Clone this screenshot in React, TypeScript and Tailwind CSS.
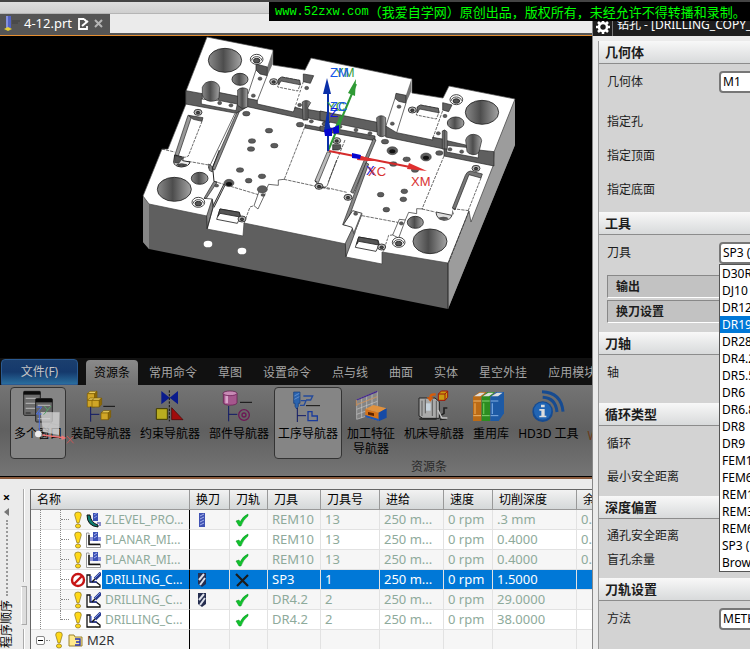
import type { ReactNode } from 'react';

type Point = [number, number];

function Holes({ points, rx = 12, ry = 8 }: { points: Point[]; rx?: number; ry?: number }) {
  return (
    <>
      {points.map(([x, y]) => (
        <ellipse key={`${x}-${y}`} cx={x} cy={y} rx={rx} ry={ry} fill="#5c5c5c" stroke="#333" strokeWidth="1.5" />
      ))}
    </>
  );
}

function Bore({ x, y, rx, ry }: { x: number; y: number; rx: number; ry: number }) {
  return <ellipse cx={x} cy={y} rx={rx} ry={ry} fill="url(#bore)" stroke="#222" strokeWidth="2.5" />;
}

function CounterBore({ x, y }: { x: number; y: number }) {
  return (
    <g stroke="#222" strokeWidth="2.5">
      <ellipse cx={x} cy={y} rx="19" ry="15" fill="#fff" />
      <path d={`M${x - 15} ${y + 3}a15 11 0 0 1 30 0`} fill="none" />
      <ellipse cx={x} cy={y + 4} rx="10" ry="7" fill="#555" />
    </g>
  );
}

function Bolt({ x, y }: { x: number; y: number }) {
  return (
    <g stroke="#222" strokeWidth="2.5">
      <ellipse cx={x} cy={y} rx="12" ry="9" fill="#bbb" />
      <ellipse cx={x} cy={y + 1} rx="5" ry="4" fill="#444" />
    </g>
  );
}

function Slot({ x, y }: { x: number; y: number }) {
  return (
    <g transform={`translate(${x} ${y})`} stroke="#222" strokeWidth="2">
      <path d="M3 6L12 0L66 10L68 22L60 42L0 30Z" fill="#fff" strokeDasharray="9 3" />
      <path d="M3 6L12 0L66 10L68 24L60 22L10 12L3 24Z" fill="#6a6a6a" />
    </g>
  );
}

function PartView() {
  return (
    <svg viewBox="0 36 593 322" className="block h-[322px] w-[593px]" role="img" aria-label="4-12.prt">
      <defs>
        <linearGradient id="bore">
          <stop offset="0" stopColor="#8a8a8a" />
          <stop offset=".45" stopColor="#4d4d4d" />
          <stop offset="1" stopColor="#a5a5a5" />
        </linearGradient>
      </defs>
      <path d="M207 37L273 50V65L305 70L311 58L412 79V93L443 98L449 86L515 99V145L448 309L149 249L143 242V196L162 149H168L186 104V91Z" fill="#5f5f5f" />
      <path d="M515 99L494 152L493 166L471 222L469 211L448 263V309L515 145Z" fill="#9c9c9c" />
      <path d="M143 196L149 204V249L143 242Z" fill="#858585" />
      <path
        d="M207 37L273 50V65L305 70L311 58L412 79V93L443 98L449 86L515 99L494 152L493 166L471 222L469 211L448 263L382 252V264L346 257V244L244 223L243 236L207 229V216L149 204L143 196L162 149H168L186 104V91Z"
        fill="#fff"
        stroke="#444"
        strokeWidth=".7"
      />
      <path d="M448 263V309" stroke="#222" />

      {/* upper left quarter */}
      <g transform="translate(130 30) scale(.33333)">
        <path d="M428 63V102L412 137V110Z" fill="#777" />
        <path d="M378 102L412 111V137L390 132L378 120Z" fill="#555" stroke="#222" strokeWidth="2" />
        <g fill="#5f5f5f" stroke="#222" strokeWidth="2">
          <path d="M167 182L217 191V208L265 212V187L325 199L352 205L382 211V222L490 246L496 232L525 240V268L352 230L320 250L167 222Z" />
          <path d="M520 132L551 137L541 160L520 155Z" />
          <path d="M525 237L600 250V278L525 262Z" />
          <path d="M525 284L600 298V308L525 294Z" />
          <path d="M320 248L328 245L254 420L246 416Z" fill="#888" />
          <path d="M174 256L184 262L145 378L135 374Z" fill="#999" />
          <path d="M176 256L219 263L216 274L190 268L184 264Z" />
          <path d="M592 365L602 368L565 458L555 452Z" fill="#bbb" />
        </g>
        <path d="M214 207L265 211L322 222L318 242L214 222Z" fill="#fff" stroke="#222" strokeWidth="2" />
        <g fill="none" stroke="#222" strokeWidth="2">
          <path d="M378 120L354 192M411 138L382 212M315 250L236 415" />
          <path d="M520 155L493 238" strokeDasharray="8 5" />
          <path d="M524 292L462 450" strokeDasharray="10 3" />
          <path d="M216 274L175 378L165 382L146 378" strokeDasharray="9 3" />
          <path d="M95 357L134 366M175 394L236 405V415" strokeDasharray="10 3" />
        </g>
        <path d="M134 375L160 382L158 392L180 396Q178 409 154 411Q132 409 131 396Z" fill="#eee" stroke="#222" strokeWidth="3" />
        <path d="M134 376L158 384L146 400L134 398ZM140 404Q154 398 170 404Q156 414 140 404" fill="#555" stroke="#222" strokeWidth="2" />
        <path d="M236 402L247 410V426L238 421Z" fill="#888" stroke="#222" strokeWidth="2" />
        <path d="M217 172Q224 154 244 154Q264 155 269 173L267 202Q262 214 241 214Q221 211 217 194Z" fill="url(#bore)" stroke="#222" strokeWidth="2" />
        <path d="M323 180Q336 168 353 178V231L337 236L323 226Z" fill="url(#bore)" stroke="#222" strokeWidth="2" />
        <path d="M517 216Q530 206 542 218L534 232V270H519Z" fill="url(#bore)" stroke="#222" strokeWidth="2" />
        <Bore x={285} y={91} rx={50} ry={36} />
        <Bore x={330} y={148} rx={24} ry={18} />
        <CounterBore x={380} y={88} />
        <Slot x={443} y={141} />
        <Bolt x={431} y={155} />
        <Bolt x={204} y={247} />
        <Holes points={[[349, 251], [417, 302], [366, 333], [433, 347], [363, 357], [330, 420], [396, 439], [510, 284]]} rx={11} ry={7} />
        <Holes points={[[390, 146], [370, 197], [269, 219], [303, 226], [530, 174], [509, 225], [544, 274], [584, 282]]} rx={6} ry={5} />
      </g>

      {/* upper right quarter */}
      <g transform="translate(320 30) scale(.33333)">
        <path d="M274 148V183L258 219V195Z" fill="#777" />
        <g fill="#5f5f5f" stroke="#222" strokeWidth="2">
          <path d="M0 243L172 277V306L0 270Z" />
          <path d="M0 288L165 318V332L0 302Z" />
          <path d="M228 190L258 196V219L236 214L225 205Z" />
          <path d="M197 288L230 308L338 330V322L372 328V357L197 321Z" />
          <path d="M368 218L396 225L386 245L368 240Z" />
          <path d="M372 330L437 345L475 360L522 365V408L372 378Z" />
          <path d="M160 326L168 330L100 490L92 486Z" fill="#888" />
        </g>
        <path d="M382 346L438 352L475 368V384L380 366Z" fill="#fff" stroke="#222" strokeWidth="2" />
        <g fill="none" stroke="#222" strokeWidth="2">
          <path d="M225 205L197 290M258 219L230 308" />
          <path d="M368 242L338 326M372 378L306 537" strokeDasharray="10 3" />
          <path d="M75 330L25 455" strokeDasharray="10 3" />
        </g>
        <path d="M170 263Q183 251 197 263V316Q183 325 172 314Z" fill="url(#bore)" stroke="#222" strokeWidth="2" />
        <path d="M367 303Q374 296 381 305V357H367Z" fill="url(#bore)" stroke="#222" strokeWidth="2" />
        <path d="M437 330Q442 313 461 313Q482 315 485 332L477 366Q470 376 458 374Q444 372 441 364Z" fill="url(#bore)" stroke="#222" strokeWidth="2" />
        <Bore x={486} y={247} rx={50} ry={36} />
        <Bore x={407} y={279} rx={25} ry={18} />
        <CounterBore x={409} y={209} />
        <Slot x={289} y={225} />
        <Bolt x={277} y={240} />
        <Bolt x={50} y={332} />
        <Bolt x={468} y={415} />
        <path d="M38 344H62V356L55 360H38Z" fill="#555" stroke="#222" strokeWidth="2" />
        <path d="M451 423L487 432L483 444L447 434L405 540L397 534L436 436Q440 425 451 423Z" fill="#777" stroke="#222" strokeWidth="2" />
        <path d="M483 444L445 541" stroke="#222" strokeWidth="2" strokeDasharray="9 3" />
        <Holes points={[[217, 362], [318, 381]]} rx={16} ry={12} />
        <ellipse cx="217" cy="364" rx="9" ry="6" fill="#111" />
        <ellipse cx="318" cy="383" rx="9" ry="6" fill="#111" />
        <Holes points={[[195, 335], [260, 388], [220, 402], [358, 369], [285, 420]]} rx={11} ry={7} />
        <Holes points={[[237, 230], [217, 281], [375, 258], [355, 310], [390, 358], [425, 365], [12, 282], [60, 290], [108, 300], [150, 310]]} rx={6} ry={5} />
      </g>

      {/* lower left quarter */}
      <g transform="translate(130 160) scale(.33333)">
        <path d="M252 64L262 66L229 115H222Z" fill="#888" stroke="#222" strokeWidth="2" />
        <path d="M246 118L250 138L232 206L230 168Z" fill="#888" stroke="#222" strokeWidth="2" />
        <path d="M268 -30L248 22L252 64" fill="none" stroke="#222" strokeWidth="3" />
        <path d="M284 73L250 141" stroke="#222" strokeWidth="7" />
        <path d="M284 73L250 141" stroke="#aaa" strokeWidth="3" />
        <g fill="none" stroke="#222" strokeWidth="2">
          <path d="M222 115L247 117L250 140L231 206" />
          <path d="M252 64L385 104M462 58L600 88M342 190L360 141L372 137" strokeDasharray="10 3" />
          <path d="M445 60V76L416 73L407 92M445 60L462 58" />
          <path d="M388 92L372 137L384 147L406 100" fill="#fff" />
        </g>
        <path d="M555 62Q558 72 575 75" fill="none" stroke="#222" strokeWidth="3" />
        <Bore x={133} y={88} rx={51} ry={36} />
        <Bore x={209} y={55} rx={25} ry={18} />
        <CounterBore x={205} y={127} />
        <g transform="translate(260 147)" stroke="#222" strokeWidth="2.5">
          <path d="M10 0L68 10L72 22L62 43L0 31Z" fill="#fff" />
          <path d="M10 0L68 10L70 24L10 13L4 22Z" fill="#555" />
        </g>
        <Bolt x={336} y={177} />
        <Bolt x={567} y={79} />
        <Holes points={[[297, 69], [397, 88]]} rx={15} ry={11} />
        <ellipse cx="297" cy="72" rx="9" ry="6" fill="#111" />
        <Holes points={[[356, 62]]} rx={10} ry={7} />
        <Holes points={[[260, 77], [399, 105]]} rx={6} ry={4} />
        <ellipse cx="234" cy="252" rx="13" ry="10" fill="#fff" />
        <ellipse cx="336" cy="273" rx="13" ry="10" fill="#fff" />
      </g>

      {/* lower right quarter */}
      <g transform="translate(320 160) scale(.33333)">
        <g fill="#888" stroke="#222" strokeWidth="2">
          <path d="M138 8L146 12L78 196L68 194Z" />
          <path d="M98 204L105 218L78 290L76 250Z" />
        </g>
        <path d="M98 152L126 160L102 222L96 202L70 194Z" fill="#fff" stroke="#222" strokeWidth="2.5" />
        <path d="M125 162L101 222" stroke="#666" strokeWidth="5" />
        <g fill="none" stroke="#222" strokeWidth="2">
          <path d="M126 167L238 188M306 147L345 156M398 146L447 152L386 308M-5 77L80 97" strokeDasharray="10 3" />
          <path d="M50 0L22 76Q16 86 0 82" />
          <path d="M238 178L218 225L236 234L256 180ZM256 180L266 157L290 161V146L308 147" fill="#fff" />
          <path d="M218 225L206 226L190 275" strokeDasharray="8 3" />
        </g>
        <path d="M348 156Q349 178 372 181Q392 180 396 166Z" fill="#ddd" stroke="#222" strokeWidth="2.5" />
        <ellipse cx="370" cy="175" rx="14" ry="5" fill="#555" />
        <path d="M397 148L402 162L395 166Z" fill="#777" />
        <Bore x={330} y={244} rx={51} ry={37} />
        <Bore x={286} y={187} rx={24} ry={18} />
        <CounterBore x={236} y={247} />
        <g transform="translate(106 231)" stroke="#222" strokeWidth="2.5">
          <path d="M10 0L68 10L72 22L62 43L0 31Z" fill="#fff" />
          <path d="M10 0L68 10L70 24L10 13L4 22Z" fill="#555" />
        </g>
        <Bolt x={185} y={261} />
        <Bolt x={84} y={112} />
        <Holes points={[[182, 104], [253, 94], [250, 118], [199, 149]]} rx={10} ry={7} />
        <Holes points={[[107, 161], [244, 190]]} rx={6} ry={5} />
      </g>

      {/* coordinate axes */}
      <path d="M328 151L356 84" stroke="#2f9a35" strokeWidth="2" />
      <path d="M356 79L348 93L355 96Z M341 114L334 129L340 131Z" fill="#2f9a35" />
      <path d="M328 151V90" stroke="#0a2fa8" strokeWidth="2" />
      <path d="M327 78L323 94H331Z M327 112L324 131H331Z" fill="#0a2fa8" />
      <path d="M324 130L332 128V136H325Z M332 128L339 125V133L334 134Z" fill="#0505d0" />
      <path d="M329 151L410 167" stroke="#d52b2b" strokeWidth="2" />
      <path d="M427 171L409 163L407 169Z M378 161L358 155L357 160L368 161Z" fill="#e03030" />
      <path d="M352 153L361 155L360 159L352 158Z" fill="#0505d0" />
      <g className="font-['Liberation_Sans'] text-[13px]">
        <text x="335" y="77" fill="#3a9d3f">YM</text>
        <text x="330" y="77" fill="#1557e8">ZM</text>
        <text x="327" y="111" fill="#3a9d3f">YC</text>
        <text x="330" y="111" fill="#1557e8">ZC</text>
        <text x="330" y="117" fill="#1515d8">Z</text>
        <text x="366" y="175" fill="#1515d8">X</text>
        <text x="368" y="176" fill="#d83333">XC</text>
        <text x="411" y="186" fill="#d83333">XM</text>
      </g>
    </svg>
  );
}

function RibbonIcon({ left, children }: { left: number; children: ReactNode }) {
  return (
    <svg viewBox={`${left} 117 102 102`} className="relative z-10 h-[34px] w-[34px] overflow-visible" aria-hidden="true">
      {children}
    </svg>
  );
}

function Cube({ x, y }: { x: number; y: number }) {
  return (
    <g transform={`translate(${x} ${y})`} stroke="#7d5c00" strokeWidth="2">
      <path d="M0 7L8 0H29L22 7Z" fill="#e8cd60" />
      <path d="M0 7H22V27H0Z" fill="#d0a526" />
      <path d="M22 7L29 0V19L22 27Z" fill="#8e6a06" />
    </g>
  );
}

const ribbonItems: { label: string[]; active?: boolean; icon: ReactNode }[] = [
  {
    label: ['多个窗口'],
    active: true,
    icon: (
      <RibbonIcon left={66}>
        <rect x="74" y="124" width="50" height="72" rx="3" fill="#6b6b6b" stroke="#252525" strokeWidth="3" />
        <path d="M74 124H124V134H74Z" fill="#0c0c0c" />
        <path d="M80 145H118M80 160H118M80 175H118" stroke="#aaa" strokeWidth="4" />
        <path d="M80 189H95" stroke="#222" strokeWidth="3" />
        <rect x="110" y="146" width="50" height="70" rx="3" fill="#666" stroke="#252525" strokeWidth="3" />
        <path d="M110 146H160V157H110Z" fill="#0c0c0c" />
        <path d="M116 166H154M116 206H154" stroke="#aaa" strokeWidth="4" />
        <path d="M125 186L182 187L180 255L132 246Z" fill="#d8d8d8" opacity=".75" />
        <path d="M155 187V220L135 246M155 220L181 226" stroke="#bbb" strokeWidth="2" fill="none" />
        <path d="M121 248V185M112 171H128L112 192H128" stroke="#4a6fe0" strokeWidth="3" fill="none" />
        <path d="M136 168L146 180L156 168M146 180L134 194" stroke="#56a56a" strokeWidth="3" fill="none" />
        <circle cx="118" cy="252" r="10" fill="#eee" />
        <path d="M130 253L188 260V256L202 264L188 270V265L130 257Z" fill="#f07575" />
        <path d="M204 258L224 280M224 258L204 280" stroke="#c85858" strokeWidth="3" />
      </RibbonIcon>
    ),
  },
  {
    label: ['装配导航器'],
    icon: (
      <RibbonIcon left={252}>
        <Cube x={262} y={124} />
        <Cube x={262} y={144} />
        <Cube x={276} y={144} />
        <Cube x={303} y={182} />
        <path d="M310 169H345" stroke="#111" strokeWidth="3" />
        <path d="M272 170V215M272 193H298" stroke="#101a66" strokeWidth="3" />
      </RibbonIcon>
    ),
  },
  {
    label: ['约束导航器'],
    icon: (
      <RibbonIcon left={459}>
        <path d="M484 123L509 143L484 163ZM534 123L509 143L534 163Z" fill="#0a1b8c" />
        <path d="M469 176H502V208H469Z" fill="#b9ad20" stroke="#3f3a00" strokeWidth="3" />
        <path d="M515 173L549 209H515Z" fill="#a00c0c" stroke="#400" strokeWidth="2" />
        <path d="M508 121V214" stroke="#111" strokeWidth="3" strokeDasharray="7 4" />
      </RibbonIcon>
    ),
  },
  {
    label: ['部件导航器'],
    icon: (
      <RibbonIcon left={666}>
        <path d="M670 130V158C670 168 711 168 711 158V130Z" fill="#a5578d" stroke="#5e1247" strokeWidth="2" />
        <path d="M676 136V160H684V138Z" fill="#d9a5ca" />
        <ellipse cx="690" cy="130" rx="21" ry="7" fill="#c78ab5" stroke="#5e1247" strokeWidth="2" />
        <path d="M720 157H756" stroke="#111" strokeWidth="3" />
        <path d="M686 168V214M686 193H712" stroke="#101a66" strokeWidth="3" />
        <circle cx="732" cy="195" r="16" fill="none" stroke="#6e1856" strokeWidth="4" />
        <circle cx="732" cy="195" r="6" fill="none" stroke="#6e1856" strokeWidth="4" />
      </RibbonIcon>
    ),
  },
  {
    label: ['工序导航器'],
    active: true,
    icon: (
      <RibbonIcon left={-27}>
        <path d="M-19 126H0V160H-5V169L-10 177L-15 169V160H-19Z" fill="#2b64ae" stroke="#123a78" strokeWidth="2" />
        <path d="M-17 138L-2 130M-17 148L-2 140" stroke="#7ba3dc" strokeWidth="2" />
        <path d="M2 152H18L12 166H0M10 138H38L32 150H18" fill="none" stroke="#244a9a" strokeWidth="4" />
        <path d="M18 167H60" stroke="#111" strokeWidth="3" />
        <path d="M-8 174V216M-8 197H18" stroke="#101a66" strokeWidth="3" />
        <path d="M24 185H36V198H52V212H24Z" fill="none" stroke="#1b3c9c" strokeWidth="4" />
      </RibbonIcon>
    ),
  },
  {
    label: ['加工特征', '导航器'],
    icon: (
      <RibbonIcon left={162}>
        <path d="M170 150L232 124V188L170 208ZM185 144V204M200 138V198M216 131V193M170 164L232 140M170 178L232 154M170 193L232 171" fill="#aaa" fillOpacity=".4" stroke="#c5c5c5" strokeWidth="2" />
        <path d="M170 150L232 124" stroke="#43268e" strokeWidth="4" />
        <path d="M170 164L232 140M169 150V168" stroke="#c97830" strokeWidth="2" />
        <path d="M196 177L220 165L260 175L236 188Z" fill="#df9240" />
        <path d="M196 177L236 188V214L196 202Z" fill="#d7741a" />
        <path d="M236 188L260 175V203L236 214Z" fill="#164aa5" />
        <path d="M204 186L222 190V198L204 194Z" fill="#5f2400" />
        <path d="M196 202L236 214V207L196 195Z" fill="#1d58b5" />
      </RibbonIcon>
    ),
  },
  {
    label: ['机床导航器'],
    icon: (
      <RibbonIcon left={351}>
        <path d="M357 144H405L418 155V205H368L357 198Z" fill="#aaa" stroke="#222" strokeWidth="3" />
        <path d="M366 152V198M376 148V190M397 148V198M409 152V204" stroke="#333" strokeWidth="2" />
        <path d="M378 160H392V182H378Z" fill="#c8d4de" />
        <path d="M358 207H410M418 199L432 190V174H442M420 208L440 206" stroke="#222" strokeWidth="5" fill="none" />
        <path d="M414 180L426 204L442 204" stroke="#c9c9c9" strokeWidth="4" fill="none" />
        <path d="M407 130Q387 128 388 142H380L391 155L401 142H394Q395 136 407 137Z" fill="#d55c0d" />
        <path d="M415 132L424 123H443V142L435 151H415Z" fill="#c99a10" stroke="#a01808" strokeWidth="3" />
        <path d="M415 132H435V151M435 132L443 123" fill="none" stroke="#a01808" strokeWidth="3" />
      </RibbonIcon>
    ),
  },
  {
    label: ['重用库'],
    icon: (
      <RibbonIcon left={522}>
        <path d="M519 140L538 126H560L544 142V213H519Z" fill="#bb6b16" />
        <path d="M545 140L563 126H585L570 142V213H545Z" fill="#2d8d20" />
        <path d="M571 140L589 126H612V190L596 213H571Z" fill="#1d5aa5" />
        <path d="M522 139L539 128H555L541 139ZM548 139L565 128H581L567 139ZM574 139L591 128H608L594 139Z" fill="#ddd" />
        <path d="M520 153H543M520 197H543" stroke="#efb76d" strokeWidth="3" />
        <path d="M546 153H569M546 197H569" stroke="#86d174" strokeWidth="3" />
        <path d="M572 153H595M572 197H595" stroke="#84aee0" strokeWidth="3" />
        <path d="M525 160V192" stroke="#e9a24a" strokeWidth="4" />
        <path d="M551 160V192" stroke="#65c353" strokeWidth="4" />
        <path d="M577 160V192" stroke="#6f9fdb" strokeWidth="4" />
      </RibbonIcon>
    ),
  },
  {
    label: ['HD3D 工具'],
    icon: (
      <RibbonIcon left={696}>
        <circle cx="731" cy="185" r="31" fill="#164b91" />
        <circle cx="731" cy="183" r="26" fill="#2165b4" />
        <path d="M726 164H737V172H726ZM721 177H737V197H742V202H721V197H727V182H721Z" fill="#ddd" />
        <path d="M731 142Q770 144 774 186M729 125Q787 127 792 185" fill="none" stroke="#164b91" strokeWidth="9" />
      </RibbonIcon>
    ),
  },
];

const ribbonTabs = ['常用命令', '草图', '设置命令', '点与线', '曲面', '实体', '星空外挂', '应用模块'];

function Ribbon() {
  return (
    <section className="border-b-2 border-[#8a5a3c] bg-[#111] text-[12px]">
      <nav className="flex h-[27px] items-end overflow-hidden whitespace-nowrap pl-px text-[#a5a5a5]">
        <button className="mr-2 h-[26px] w-[77px] shrink-0 rounded-t-sm border border-[#2a5a92] bg-linear-to-b from-[#1b3f6e] via-[#15396c] to-[#2a6e9e] text-[#c4c4c4]">
          文件(F)
        </button>
        <button className="h-[25px] shrink-0 rounded-t-sm bg-linear-to-b from-[#8a8a8a] to-[#737373] px-2 text-black">
          资源条
        </button>
        {ribbonTabs.map((tab) => (
          <button key={tab} className="-mr-px h-[25px] shrink-0 px-[11px]">
            {tab}
          </button>
        ))}
      </nav>
      <div className="relative flex h-[92px] gap-[9px] overflow-hidden border-b border-black bg-linear-to-b from-[#747474] via-[#606060] to-[#757575] pt-[2px] pl-[14px]">
        {ribbonItems.map((item) => (
          <button
            key={item.label[0]}
            className={`-mx-1 flex h-[72px] shrink-0 flex-col items-center rounded-sm border px-[3px] pt-px leading-[15px] text-black ${
              item.active ? 'border-[#333] bg-[#858585]' : 'border-transparent'
            }`}
          >
            {item.icon}
            <span className="mt-[3px] whitespace-nowrap">
              {item.label.map((line) => (
                <span key={line} className="block">
                  {line}
                </span>
              ))}
            </span>
          </button>
        ))}
        <span className="shrink-0 pt-10 text-[#6b3a17]">W</span>
        <span className="absolute bottom-0 left-[411px] text-[#2a2a2a]">资源条</span>
      </div>
    </section>
  );
}

function Exclamation() {
  return (
    <svg viewBox="0 0 8 18" className="h-[18px] w-2 shrink-0" aria-hidden="true">
      <path d="M4 1Q7.500 1 7.300 4L5 12H3L.7 4Q.5 1 4 1Z" fill="#ffd91a" stroke="#8a7420" strokeWidth=".7" />
      <ellipse cx="4" cy="15" rx="2.600" ry="2" fill="#ffd91a" stroke="#8a7420" strokeWidth=".7" />
    </svg>
  );
}

function Blocked() {
  return (
    <svg viewBox="0 0 16 16" className="-mx-1 h-4 w-4 shrink-0" aria-hidden="true">
      <circle cx="8" cy="8" r="6" fill="#fff" stroke="#c61414" strokeWidth="2.400" />
      <path d="M4 12L12 4" stroke="#c61414" strokeWidth="2.400" />
    </svg>
  );
}

type OperationKind = 'zlevel' | 'planar' | 'drilling';

function OperationIcon({ kind }: { kind: OperationKind }) {
  return (
    <svg viewBox="0 0 15 16" className="h-4 w-[15px] shrink-0" fill="none" aria-hidden="true">
      {kind === 'zlevel' && (
        <>
          <path d="M1 3H4Q5 11 12 13V15Q1 14 1 3Z" fill="#0b7d70" stroke="#111" />
          <path d="M7 1H12V9H7Z" fill="#3c51b5" />
          <path d="M8 3L11 1M8 6L11 4" stroke="#8fa0e8" />
          <path d="M11 11H15M13 13H15" stroke="#16209c" />
        </>
      )}
      {kind === 'planar' && (
        <>
          <path d="M.5 1V15.500H14.500V12H3V1Z" fill="#fff" stroke="#999" />
          <path d="M3 3V12.500H14" stroke="#111" strokeWidth="1.500" />
          <path d="M7 0H12V9H7Z" fill="#3c51b5" />
          <path d="M4 6H7M4 8H7M12 6H15M12 8H15" stroke="#2230b5" />
          <path d="M8 3L11 1M8 6L11 4" stroke="#aab5ef" />
        </>
      )}
      {kind === 'drilling' && (
        <>
          <path d="M4 3H1V15H14V13L10 10H4Z" fill="#fff" stroke="#111" strokeWidth="1.300" />
          <path d="M15 1L9 7" stroke="#26398f" strokeWidth="3.500" />
          <path d="M14 1L9 6" stroke="#7d92dd" />
          <path d="M5 4V10H11" stroke="#223bc7" strokeWidth="1" />
          <path d="M9 7L6 10" stroke="#111" strokeWidth="1.500" />
        </>
      )}
    </svg>
  );
}

function ToolChange({ kind }: { kind: 'mill' | 'drill' }) {
  return (
    <svg viewBox="0 0 8 14" className="h-[14px] w-2" aria-hidden="true">
      {kind === 'mill' ? (
        <>
          <path d="M1 0H7V14H1Z" fill="#4053b3" />
          <path d="M2 3L6 1M2 6L6 4M2 9L6 7M2 12L6 10" stroke="#a6b2ec" />
        </>
      ) : (
        <>
          <path d="M0 0H8V11L4 14L0 11Z" fill="#252e50" />
          <path d="M1 7L6 1M2 12L7 5" stroke="#dce0ea" strokeWidth="2" />
        </>
      )}
    </svg>
  );
}

function PathStatus({ ok }: { ok: boolean }) {
  return (
    <svg viewBox="0 0 14 14" className="h-[14px] w-[14px]" aria-hidden="true">
      {ok ? (
        <path d="M1 8L4 7L5 9Q8 3 13 1L13 3Q8 7 6 13H4Z" fill="#0fc32c" stroke="#078c1c" strokeWidth=".5" />
      ) : (
        <path d="M1 1L13 13M13 2L2 13" stroke="#1b1b1b" strokeWidth="2.200" />
      )}
    </svg>
  );
}

type Operation = {
  name: string;
  kind: OperationKind;
  change?: 'mill' | 'drill';
  tool: string;
  number: string;
  depth: string;
  stock?: string;
  selected?: boolean;
};

const operations: Operation[] = [
  { name: 'ZLEVEL_PRO...', kind: 'zlevel', change: 'mill', tool: 'REM10', number: '13', depth: '.3 mm', stock: '0.' },
  { name: 'PLANAR_MI...', kind: 'planar', tool: 'REM10', number: '13', depth: '0.4000', stock: '0.' },
  { name: 'PLANAR_MI...', kind: 'planar', tool: 'REM10', number: '13', depth: '0.4000', stock: '0.' },
  { name: 'DRILLING_C...', kind: 'drilling', change: 'drill', tool: 'SP3', number: '1', depth: '1.5000', selected: true },
  { name: 'DRILLING_C...', kind: 'drilling', change: 'drill', tool: 'DR4.2', number: '2', depth: '29.0000' },
  { name: 'DRILLING_C...', kind: 'drilling', tool: 'DR4.2', number: '2', depth: '38.0000' },
];

const columns = [
  { title: '名称', width: 'w-[159px]' },
  { title: '换刀', width: 'w-10' },
  { title: '刀轨', width: 'w-[38px]' },
  { title: '刀具', width: 'w-[53px]' },
  { title: '刀具号', width: 'w-[59px]' },
  { title: '进给', width: 'w-16' },
  { title: '速度', width: 'w-[49px]' },
  { title: '切削深度', width: 'w-[84px]' },
  { title: '余量', width: 'w-16' },
];

function OperationRow({ op, last }: { op: Operation; last: boolean }) {
  const cell = `h-5 border-r border-b border-[#e2e2e2] p-0 ${op.selected ? 'bg-[#0078d7]' : ''}`;
  return (
    <tr className={op.selected ? 'text-white' : 'text-[#8eaa9b] odd:bg-[#f6f6f6] even:bg-white'}>
      <td className="h-5 border-r border-b border-r-black border-b-[#e2e2e2] p-0 text-[12px]">
        <div className={`flex h-[19px] items-center pl-[9px] ${op.selected ? 'bg-white' : ''}`}>
          <span className="h-[19px] w-5 shrink-0 border-l border-dotted border-[#888]" />
          <span className="h-[19px] w-[14px] shrink-0">
            <span className={`block border-l border-dotted border-[#888] ${last ? 'h-[10px]' : 'h-[19px]'}`}>
              <span className="block h-[10px] w-2 border-b border-dotted border-[#888]" />
            </span>
          </span>
          {op.selected ? <Blocked /> : <Exclamation />}
          <span className="w-1 shrink-0" />
          <OperationIcon kind={op.kind} />
          <span className={`ml-px flex-1 pl-[3px] leading-[19px] ${op.selected ? 'bg-[#0078d7]' : ''}`}>{op.name}</span>
        </div>
      </td>
      <td className={cell}>
        <div className="pl-2">{op.change && <ToolChange kind={op.change} />}</div>
      </td>
      <td className={cell}>
        <div className="pl-[5px]">
          <PathStatus ok={!op.selected} />
        </div>
      </td>
      <td className={`${cell} indent-1`}>{op.tool}</td>
      <td className={`${cell} indent-1`}>{op.number}</td>
      <td className={`${cell} indent-1`}>250 m...</td>
      <td className={`${cell} indent-1`}>0 rpm</td>
      <td className={`${cell} indent-1`}>{op.depth}</td>
      <td className={`${cell} indent-1`}>{op.stock}</td>
    </tr>
  );
}

function Navigator() {
  return (
    <section className="flex min-h-0 flex-1 overflow-hidden bg-[#ebebeb]">
      <div className="flex w-[21px] shrink-0 flex-col items-start pt-[10px]">
        <button className="h-4 w-[13px] text-center text-[13px] leading-4 font-bold text-black" aria-label="关闭">
          ×
        </button>
        <svg viewBox="0 0 5 8" className="mt-[3px] ml-1 h-2 w-[5px]" aria-hidden="true">
          <path d="M5 0V8L0 4Z" fill="#777" />
        </svg>
        <span className="mt-1 ml-[6px] h-[76px] border-l-2 border-dotted border-[#999]" />
        <span className="mt-1 -rotate-180 text-[12px] leading-[14px] whitespace-nowrap [writing-mode:vertical-rl]">
          <span className="[text-orientation:sideways]">程序顺序</span>
        </span>
      </div>
      <div className="flex w-[9px] shrink-0 flex-col items-center pt-[10px] pr-[3px]">
        <span className="h-[93px] w-[2px] border-l border-[#aaa] bg-white" />
        <span className="mt-1 h-[39px] w-[6px] border border-[#aaa] border-l-white bg-[#ddd]" />
        <span className="mt-1 w-[2px] flex-1 border-l border-[#aaa] bg-white" />
      </div>
      <div className="mt-[10px] min-w-0 flex-1 overflow-hidden border-t border-l border-[#666] bg-[#f6f6f6]">
        <table className="w-[610px] table-fixed border-separate border-spacing-0 text-left text-[13px] leading-[19px] whitespace-nowrap">
          <thead>
            <tr>
              {columns.map((col) => (
                <th
                  key={col.title}
                  className={`${col.width} h-5 border-r border-b border-[#999] bg-linear-to-b from-[#f2f2f2] to-[#d5d8d9] p-0 pl-[6px] text-[12px] font-normal text-black`}
                >
                  {col.title}
                </th>
              ))}
            </tr>
          </thead>
          <tbody>
            {operations.map((op, i) => (
              <OperationRow key={i} op={op} last={i === operations.length - 1} />
            ))}
            <tr className="text-[#333]">
              <td className="h-5 border-r border-r-black p-0">
                <div className="flex items-center pl-[5px]">
                  <span className="flex h-[9px] w-[9px] items-center justify-center rounded-xs border border-[#888] bg-white">
                    <span className="h-px w-[5px] bg-black" />
                  </span>
                  <span className="mr-[5px] ml-px w-1 border-b border-dotted border-[#888]" />
                  <Exclamation />
                  <svg viewBox="0 0 15 14" className="mr-[4px] ml-[5px] h-[14px] w-[15px]" aria-hidden="true">
                    <path d="M1 2H6L7 4H14V13H1Z" fill="#ffe98d" stroke="#9a8330" />
                    <path d="M7 6H12V12H7M8 9H12" fill="none" stroke="#2331b8" strokeWidth="1.300" />
                  </svg>
                  M2R
                </div>
              </td>
              {columns.slice(1).map((col) => (
                <td key={col.title} className="border-r border-[#e2e2e2]" />
              ))}
            </tr>
          </tbody>
        </table>
      </div>
    </section>
  );
}

const toolList = [
  'D30R5', 'DJ10', 'DR12', 'DR19', 'DR28', 'DR4.2', 'DR5.5', 'DR6', 'DR6.8',
  'DR8', 'DR9', 'FEM10', 'FEM6', 'REM10', 'REM3', 'REM6', 'SP3 (', 'Browse',
];

function Section({ title, className = '', children }: { title: string; className?: string; children: ReactNode }) {
  return (
    <section className={className}>
      <h2 className="h-[23px] border-b border-[#8c8c8c] bg-linear-to-b from-[#f8f8f8] to-[#d8dadb] pl-[6px] text-[13px] leading-[23px] font-bold text-[#1c1c1c]">
        {title}
      </h2>
      {children}
    </section>
  );
}

function Label({ className = 'h-[34px]', children }: { className?: string; children: ReactNode }) {
  return <p className={`flex items-center pl-2 ${className}`}>{children}</p>;
}

function SelectRow({ id, label, value, children }: { id: string; label: string; value: string; children?: ReactNode }) {
  return (
    <div className="flex h-9 items-center pl-2">
      <label htmlFor={id} className="w-[112px] shrink-0">
        {label}
      </label>
      <div className="relative shrink-0">
        <select
          id={id}
          className="block h-[22px] w-40 appearance-none rounded-sm border-2 border-[#777] bg-white pl-[2px] text-[12px] text-black"
        >
          <option>{value}</option>
        </select>
        {children}
      </div>
    </div>
  );
}

function DialogPanel() {
  return (
    <aside className="flex w-[158px] shrink-0 flex-col overflow-hidden border-l border-[#888] bg-[#ebebeb] text-[12px] text-[#1c1c1c]">
      <header className="flex h-[22px] shrink-0 items-center bg-[#1e1e1e] pl-[2px] whitespace-nowrap text-white">
        <svg viewBox="0 0 16 16" className="mt-1 h-4 w-4 shrink-0" aria-hidden="true">
          <circle cx="8" cy="8" r="4" fill="none" stroke="#fff" strokeWidth="2.500" />
          <path d="M8 1V4M8 12V15M1 8H4M12 8H15M3 3L5 5M11 11L13 13M3 13L5 11M11 5L13 3" stroke="#fff" strokeWidth="2.500" />
        </svg>
        <span className="ml-px h-full border-l border-[#777]" />
        <h1 className="ml-1 text-[12px]">钻孔 - [DRILLING_COPY_</h1>
      </header>
      <div className="mt-[5px] ml-[5px] flex-1 border-l border-[#999] bg-[#d3d3d3]">
        <Section title="几何体" className="pb-[5px]">
          <SelectRow id="geometry" label="几何体" value="M1" />
          <div className="mt-[5px]">
            <Label>指定孔</Label>
            <Label>指定顶面</Label>
            <Label>指定底面</Label>
          </div>
        </Section>
        <Section title="工具" className="pb-[9px]">
          <SelectRow id="tool" label="刀具" value="SP3 (钻刀)">
            <ul className="absolute top-full left-0 z-10 w-40 border border-[#555] bg-white text-black" role="listbox" aria-label="刀具">
              {toolList.map((tool) => (
                <li
                  key={tool}
                  role="option"
                  aria-selected={tool === 'DR19'}
                  className={`h-[17px] pl-[2px] leading-[17px] ${tool === 'DR19' ? 'bg-[#0078d7] text-white' : ''}`}
                >
                  {tool}
                </li>
              ))}
            </ul>
          </SelectRow>
          <div className="mt-1 ml-2 flex flex-col gap-[2px] text-[12px] font-bold">
            <button className="h-[23px] border border-r-0 border-[#888] border-b-white bg-[#c2c2c2] pl-2 text-left">输出</button>
            <button className="h-[23px] border border-r-0 border-[#888] border-b-white bg-[#c2c2c2] pl-2 text-left">换刀设置</button>
          </div>
        </Section>
        <Section title="刀轴" className="pb-3">
          <Label className="h-9">轴</Label>
        </Section>
        <Section title="循环类型" className="pb-1">
          <Label className="h-9">循环</Label>
          <Label className="h-[30px]">最小安全距离</Label>
        </Section>
        <Section title="深度偏置" className="pb-[6px]">
          <Label className="mt-[5px] h-6">通孔安全距离</Label>
          <Label className="h-6">盲孔余量</Label>
        </Section>
        <Section title="刀轨设置">
          <SelectRow id="method" label="方法" value="METHOD" />
        </Section>
      </div>
    </aside>
  );
}

export default function App() {
  return (
    <div className="relative flex h-screen flex-col overflow-hidden bg-[#ebebeb] font-['Noto_Sans','Noto_Sans_CJK_SC',sans-serif]">
      <div className="h-[14px] shrink-0 border-t-2 border-b border-t-[#444] border-b-[#b5b5b5] bg-linear-to-b from-[#dedede] to-[#cfcfcf]" />
      <p className="absolute top-[2px] right-0 z-20 flex h-[19px] w-[481px] items-center overflow-hidden bg-black pl-[6px] text-[13px] whitespace-nowrap text-[#00ff00]">
        <span className="font-['Liberation_Mono',monospace] text-[12px]">www.52zxw.com</span>
        <span className="font-['Noto_Sans_CJK_SC',sans-serif]">（我爱自学网）原创出品，版权所有，未经允许不得转播和录制。</span>
      </p>
      <div className="flex min-h-0 flex-1">
        <main className="flex min-w-0 flex-1 flex-col">
          <div className="flex h-[22px] shrink-0 border-b border-[#e58f32]">
            <div className="flex w-full border-b-2 border-[#555]">
              <div className="flex w-[110px] items-center bg-[#555] text-[13px] text-white">
                <svg viewBox="0 0 22 16" className="h-4 w-[22px] shrink-0" aria-hidden="true">
                  <path d="M6 0H11V12H6Z" fill="#5262c4" />
                  <path d="M7 0V12" stroke="#b5bff5" />
                  <path d="M4 13L8 11L12 13L8 15Z" fill="#e5cf37" />
                  <path d="M12 5H20M12 7H18" stroke="#404040" />
                </svg>
                <span className="ml-[2px]">4-12.prt</span>
                <svg viewBox="0 0 11 12" className="ml-[6px] h-3 w-[11px]" fill="none" stroke="#fff" aria-hidden="true">
                  <path d="M6 1H1V11H9V8M6 1L9 4" strokeWidth="1.800" />
                  <path d="M4 8L10 3" strokeWidth="2" />
                </svg>
                <button className="ml-[5px]" aria-label="关闭">
                  <svg viewBox="0 0 9 9" className="h-[9px] w-[9px]" aria-hidden="true">
                    <path d="M1 1L8 8M8 1L1 8" stroke="#b5b5b5" strokeWidth="2" />
                  </svg>
                </button>
              </div>
            </div>
          </div>
          <div className="shrink-0 overflow-hidden bg-black">
            <PartView />
          </div>
          <Ribbon />
          <Navigator />
        </main>
        <DialogPanel />
      </div>
    </div>
  );
}
